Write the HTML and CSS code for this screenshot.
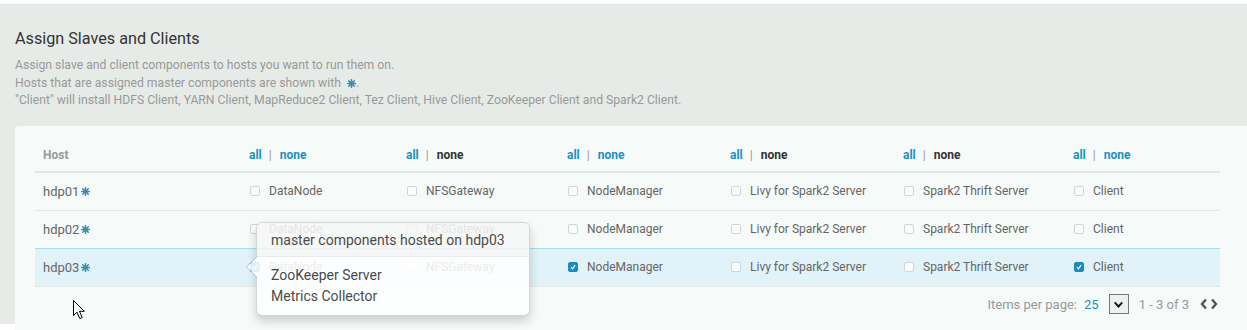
FILE: index.html
```html
<!DOCTYPE html>
<html>
<head>
<meta charset="utf-8">
<link rel="stylesheet" href="styles.css">
</head>
<body>
<div class="page">
  <h2 class="title">Assign Slaves and Clients</h2>
  <div class="desc">
    <div>Assign slave and client components to hosts you want to run them on.</div>
    <div>Hosts that are assigned master components are shown with <svg class="star" viewBox="0 0 10 10"><g stroke="currentColor" stroke-width="1.6" stroke-linecap="round"><line x1="5" y1="0.6" x2="5" y2="9.4"/><line x1="0.6" y1="5" x2="9.4" y2="5"/><line x1="1.9" y1="1.9" x2="8.1" y2="8.1"/><line x1="8.1" y1="1.9" x2="1.9" y2="8.1"/></g><circle cx="5" cy="5" r="2.6" fill="currentColor"/></svg>.</div>
    <div>"Client" will install HDFS Client, YARN Client, MapReduce2 Client, Tez Client, Hive Client, ZooKeeper Client and Spark2 Client.</div>
  </div>

  <div class="card">
    <div class="grid">
      <div class="row head">
        <div class="cell host-h">Host</div>
        <div class="cell"><span class="lnk">all</span><span class="sep">|</span><span class="lnk">none</span></div>
        <div class="cell"><span class="lnk">all</span><span class="sep">|</span><span class="dark">none</span></div>
        <div class="cell"><span class="lnk">all</span><span class="sep">|</span><span class="lnk">none</span></div>
        <div class="cell"><span class="lnk">all</span><span class="sep">|</span><span class="dark">none</span></div>
        <div class="cell"><span class="lnk">all</span><span class="sep">|</span><span class="dark">none</span></div>
        <div class="cell"><span class="lnk">all</span><span class="sep">|</span><span class="lnk">none</span></div>
      </div>

      <div class="row">
        <div class="cell host">hdp01<svg class="star" viewBox="0 0 10 10"><g stroke="currentColor" stroke-width="1.6" stroke-linecap="round"><line x1="5" y1="0.6" x2="5" y2="9.4"/><line x1="0.6" y1="5" x2="9.4" y2="5"/><line x1="1.9" y1="1.9" x2="8.1" y2="8.1"/><line x1="8.1" y1="1.9" x2="1.9" y2="8.1"/></g><circle cx="5" cy="5" r="2.6" fill="currentColor"/></svg></div>
        <div class="cell"><span class="cb"></span>DataNode</div>
        <div class="cell"><span class="cb"></span>NFSGateway</div>
        <div class="cell"><span class="cb"></span>NodeManager</div>
        <div class="cell"><span class="cb"></span>Livy for Spark2 Server</div>
        <div class="cell"><span class="cb"></span>Spark2 Thrift Server</div>
        <div class="cell"><span class="cb"></span>Client</div>
      </div>

      <div class="row">
        <div class="cell host">hdp02<svg class="star" viewBox="0 0 10 10"><g stroke="currentColor" stroke-width="1.6" stroke-linecap="round"><line x1="5" y1="0.6" x2="5" y2="9.4"/><line x1="0.6" y1="5" x2="9.4" y2="5"/><line x1="1.9" y1="1.9" x2="8.1" y2="8.1"/><line x1="8.1" y1="1.9" x2="1.9" y2="8.1"/></g><circle cx="5" cy="5" r="2.6" fill="currentColor"/></svg></div>
        <div class="cell"><span class="cb"></span>DataNode</div>
        <div class="cell"><span class="cb"></span>NFSGateway</div>
        <div class="cell"><span class="cb"></span>NodeManager</div>
        <div class="cell"><span class="cb"></span>Livy for Spark2 Server</div>
        <div class="cell"><span class="cb"></span>Spark2 Thrift Server</div>
        <div class="cell"><span class="cb"></span>Client</div>
      </div>

      <div class="row active">
        <div class="cell host">hdp03<svg class="star" viewBox="0 0 10 10"><g stroke="currentColor" stroke-width="1.6" stroke-linecap="round"><line x1="5" y1="0.6" x2="5" y2="9.4"/><line x1="0.6" y1="5" x2="9.4" y2="5"/><line x1="1.9" y1="1.9" x2="8.1" y2="8.1"/><line x1="8.1" y1="1.9" x2="1.9" y2="8.1"/></g><circle cx="5" cy="5" r="2.6" fill="currentColor"/></svg></div>
        <div class="cell"><span class="cb on"><svg viewBox="0 0 10 10"><path d="M2.5 5.2 L4.4 7.3 L7.6 2.6" fill="none" stroke="#fff" stroke-width="1.5"/></svg></span>DataNode</div>
        <div class="cell"><span class="cb"></span>NFSGateway</div>
        <div class="cell"><span class="cb on"><svg viewBox="0 0 10 10"><path d="M2.5 5.2 L4.4 7.3 L7.6 2.6" fill="none" stroke="#fff" stroke-width="1.5"/></svg></span>NodeManager</div>
        <div class="cell"><span class="cb"></span>Livy for Spark2 Server</div>
        <div class="cell"><span class="cb"></span>Spark2 Thrift Server</div>
        <div class="cell"><span class="cb on"><svg viewBox="0 0 10 10"><path d="M2.5 5.2 L4.4 7.3 L7.6 2.6" fill="none" stroke="#fff" stroke-width="1.5"/></svg></span>Client</div>
      </div>
    </div>

    <div class="pager">
      <span class="muted">Items per page:</span>
      <span class="per">25</span>
      <span class="select"><svg viewBox="0 0 12 12"><path d="M2.5 4 L6 7.8 L9.5 4" fill="none" stroke="#111" stroke-width="1.8"/></svg></span>
      <span class="muted range">1 - 3 of 3</span>
      <span class="arrows"><svg viewBox="0 0 20 14"><path d="M7 2.5 L3 7 L7 11.5" fill="none" stroke="#555" stroke-width="2.4"/><path d="M13 2.5 L17 7 L13 11.5" fill="none" stroke="#555" stroke-width="2.4"/></svg></span>
    </div>

    <div class="popover">
      <div class="pop-arrow"></div>
      <div class="pop-title">master components hosted on hdp03</div>
      <div class="pop-body">
        <div>ZooKeeper Server</div>
        <div>Metrics Collector</div>
      </div>
    </div>
  </div>
</div>
<svg class="cursor" viewBox="0 0 13 20"><path d="M0.5 0.5 L0.5 15.5 L4 12.2 L6.8 18.6 L9.2 17.6 L6.5 11.3 L11.3 11.3 Z" fill="#fff" stroke="#000" stroke-width="1" stroke-linejoin="round"/></svg>
</body>
</html>
```

FILE: styles.css
```css
html, body {
  margin: 0;
  padding: 0;
  background: #ffffff;
  overflow: hidden;
}
body {
  font-family: Roboto, "Liberation Sans", Arial, sans-serif;
  height: 330px;
  position: relative;
}
.page {
  margin-top: 4px;
  border-top: 1px solid #dfe3e0;
  background: #e7ebe8;
  padding: 24px 0 0 15px;
  height: 320px;
  box-sizing: border-box;
}
.title {
  margin: 0;
  font-size: 16.2px;
  font-weight: 400;
  line-height: 20px;
  color: #333;
}
.desc {
  margin-top: 8px;
  font-size: 12.2px;
  line-height: 17.5px;
  color: #999;
}
.star {
  width: 9px;
  height: 9px;
  color: #3a8fb0;
  vertical-align: -1px;
  margin-left: 3px;
}
.card {
  position: relative;
  margin-top: 16px;
  background: #f6faf8;
  border-radius: 4px 0 0 0;
  padding: 10px 0 20px 20px;
  min-height: 200px;
}
.grid {
  width: 1185px;
}
.row {
  display: grid;
  grid-template-columns: 206px 157px 161px 163px 173px 170px 155px;
  height: 37px;
  border-bottom: 1px solid #e4e8e5;
}
.row.head {
  height: 35px;
  border-bottom: 2px solid #e2e6e3;
}
.row.head .cell {
  padding-top: 4px;
}
.row.active {
  background: #e1f2f8;
  border-top: 1px solid #a9daee;
  margin-top: -1px;
}
.cell {
  display: flex;
  align-items: center;
  padding-left: 8px;
  font-size: 12px;
  color: #666;
  white-space: nowrap;
}
.head .cell {
  font-weight: 700;
  font-size: 12px;
}
.host-h {
  color: #999;
}
.lnk {
  color: #1a92c2;
}
.dark {
  color: #333;
}
.sep {
  color: #999;
  font-weight: 400;
  margin: 0 8px 0 7px;
}
.host {
  font-size: 13px;
  color: #666;
}
.host .star {
  margin-left: 2px;
  vertical-align: 0;
}
.cb {
  width: 10px;
  height: 10px;
  box-sizing: border-box;
  border: 1px solid #d3d6d5;
  border-radius: 2px;
  background: #fbfdfc;
  margin: 0 9px 0 1px;
  display: inline-flex;
}
.cb.on {
  background: #1c8bc4;
  border-color: #1c8bc4;
}
.cb svg {
  width: 100%;
  height: 100%;
}
.pager {
  width: 1185px;
  height: 35px;
  display: flex;
  align-items: center;
  justify-content: flex-end;
  font-size: 13px;
}
.muted {
  color: #999;
}
.per {
  color: #1a92c2;
  margin-left: 7px;
}
.select {
  width: 20px;
  height: 20px;
  box-sizing: border-box;
  border: 1px solid #777;
  background: #f0f0f0;
  margin-left: 10px;
  display: inline-flex;
  align-items: center;
  justify-content: center;
}
.select svg {
  width: 13px;
  height: 13px;
}
.range {
  margin-left: 10px;
}
.arrows {
  margin-left: 9px;
  display: inline-flex;
}
.arrows svg {
  width: 22px;
  height: 14px;
}
.popover {
  position: absolute;
  left: 241px;
  top: 96px;
  width: 274px;
  box-sizing: border-box;
  background: #fff;
  border: 1px solid rgba(0, 0, 0, 0.18);
  border-radius: 6px;
  box-shadow: 0 5px 10px rgba(0, 0, 0, 0.2);
  opacity: 0.88;
}
.pop-title {
  padding: 9px 14px 7px;
  font-size: 14px;
  line-height: 17px;
  color: #333;
  background: #f7f7f7;
  border-bottom: 1px solid #ebebeb;
  border-radius: 5px 5px 0 0;
}
.pop-body {
  padding: 8px 14px 8px 14px;
  font-size: 14px;
  line-height: 21px;
  color: #333;
}
.pop-arrow {
  position: absolute;
  left: -11px;
  top: 33px;
  width: 0;
  height: 0;
  border-style: solid;
  border-width: 11px 11px 11px 0;
  border-color: transparent rgba(0, 0, 0, 0.22) transparent transparent;
}
.pop-arrow::after {
  content: "";
  position: absolute;
  left: 1px;
  top: -10px;
  border-style: solid;
  border-width: 10px 10px 10px 0;
  border-color: transparent #fff transparent transparent;
}
.cursor {
  position: absolute;
  left: 73px;
  top: 300px;
  width: 13px;
  height: 20px;
}
```
